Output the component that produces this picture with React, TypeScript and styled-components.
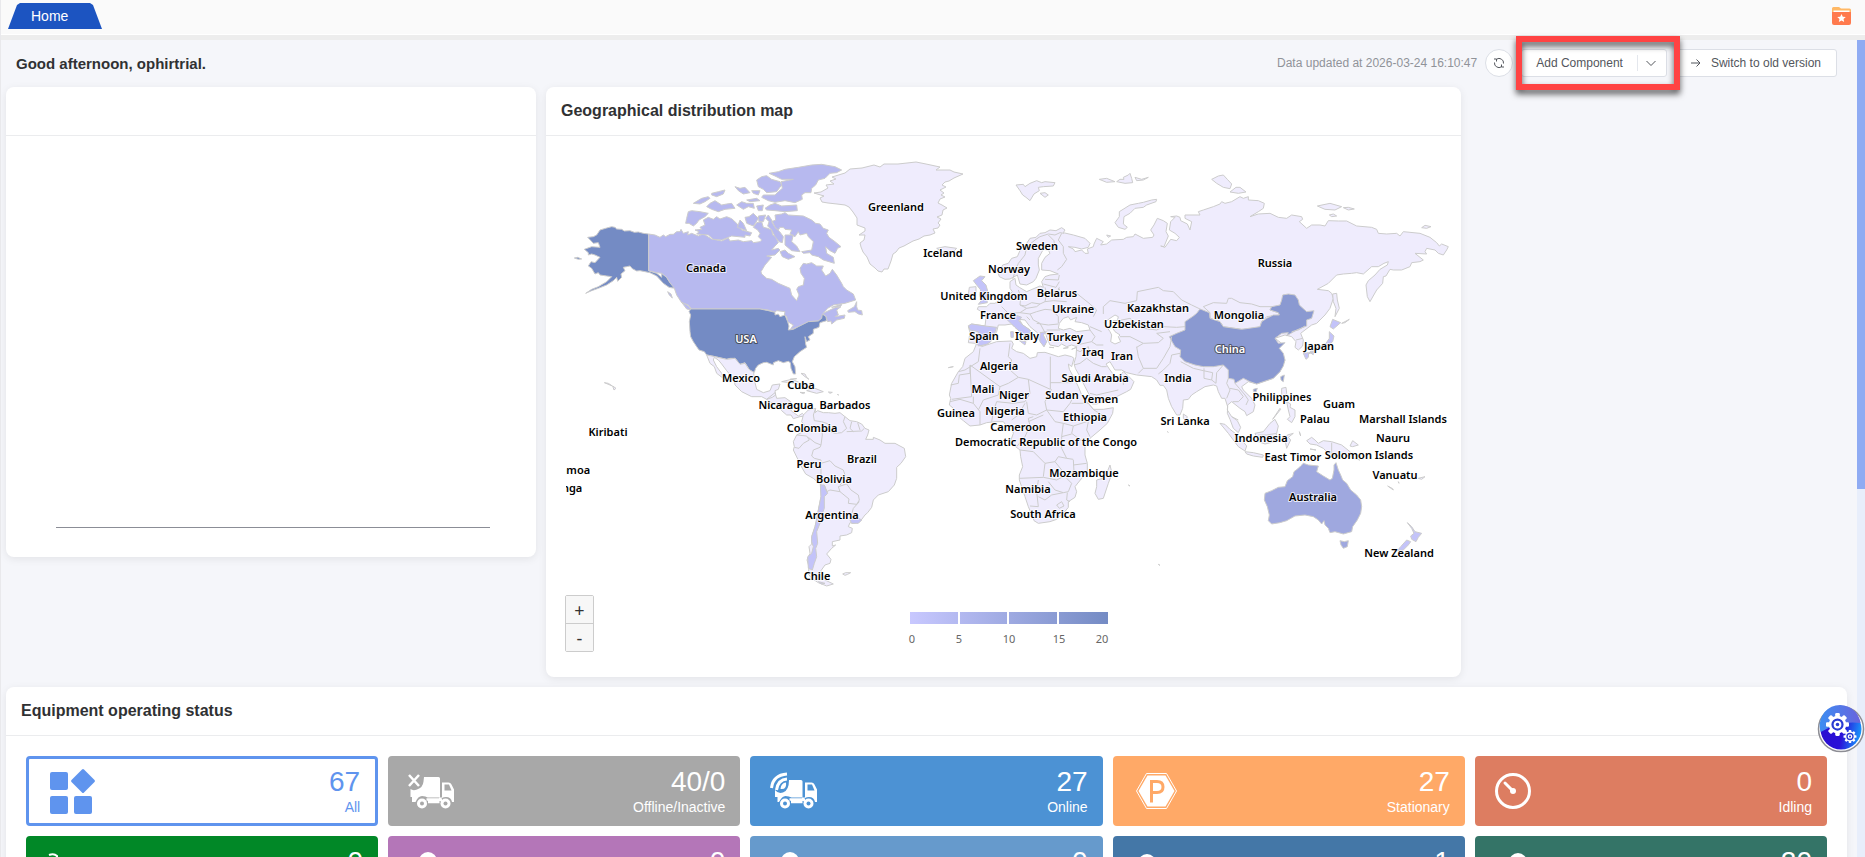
import React from 'react';
import styled, { createGlobalStyle, css } from 'styled-components';

const GlobalStyle = createGlobalStyle`
  * { box-sizing: border-box; }
  html, body { margin: 0; padding: 0; }
  body {
    background: #f5f6fa;
    color: #303133;
    font-family: "Liberation Sans", Arial, sans-serif;
    overflow: hidden;
  }
  button { font-family: inherit; cursor: pointer; }
`;

/* ---------- page frame ---------- */

const Page = styled.div`
  height: 100vh;
  display: flex;
  flex-direction: column;
  overflow: hidden;
  border-left: 1px solid #e9e9ec;
`;

const TopBar = styled.header`
  display: flex;
  flex: none;
  justify-content: space-between;
  align-items: flex-start;
  height: 40px;
  padding: 3px 14px 0 7px;
  background: #fafafa;
  border-bottom: 5px solid #ededed;
  box-shadow: inset 0 -1px 0 #ffffff;
`;

const Tab = styled.button`
  width: 94px;
  height: 26px;
  padding: 0 0 0 23px;
  border: 0;
  text-align: left;
  font-size: 14px;
  line-height: 26px;
  color: #ffffff;
  background: #1c54c1;
  clip-path: polygon(9px 2px, 12px 0, 82px 0, 85px 2px, 100% 100%, 0 100%);
`;

const FolderButton = styled.button`
  display: flex;
  margin-top: 4px;
  padding: 0;
  border: 0;
  background: none;
`;

const Body = styled.div`
  display: flex;
  flex: 1;
  min-height: 0;
`;

const Content = styled.main`
  flex: 1;
  min-width: 0;
`;

const ScrollTrack = styled.div`
  flex: none;
  width: 8px;
  background: #e8eefb;
`;

const ScrollThumb = styled.div`
  height: 55%;
  background: #8fabf3;
`;

/* ---------- greeting row ---------- */

const Greeting = styled.div`
  display: flex;
  align-items: center;
  justify-content: space-between;
  height: 47px;
  padding: 0 20px 0 15px;
`;

const GreetingText = styled.h1`
  margin: 0;
  font-size: 15px;
  line-height: 20px;
`;

const Actions = styled.div`
  display: flex;
  align-items: center;
  gap: 8px;
  margin-bottom: 1px;
`;

const Updated = styled.span`
  font-size: 12px;
  color: #909399;
`;

const control = css`
  display: flex;
  align-items: center;
  height: 28px;
  border: 1px solid #dcdfe6;
  background: #ffffff;
  color: #53565c;
  font-size: 12px;
`;

const RoundButton = styled.button`
  ${control}
  justify-content: center;
  width: 28px;
  padding: 0;
  border-radius: 50%;
`;

const OutlineButton = styled.button`
  ${control}
  gap: 10px;
  padding: 0 15px;
  border-radius: 3px;
`;

const SplitButton = styled.div`
  ${control}
  position: relative;
  border-radius: 3px;
`;

const SplitMain = styled.button`
  padding: 0 14px;
  border: 0;
  background: none;
  color: inherit;
  font-size: 12px;
`;

const SplitToggle = styled.button`
  display: flex;
  align-items: center;
  height: 16px;
  padding: 0 9px 0 7px;
  border: 0;
  border-left: 1px solid #e4e7ed;
  background: none;
  color: inherit;
`;

const Highlight = styled.div`
  position: absolute;
  z-index: 5;
  inset: -14px -14px -14px -6px;
  border: 6px solid #ff4343;
  filter: drop-shadow(0 4px 3px rgba(0, 0, 0, 0.65));
  pointer-events: none;
`;

/* ---------- cards ---------- */

const CardGrid = styled.div`
  display: grid;
  grid-template-columns: 530fr 915fr 376fr;
  align-items: start;
  gap: 10px;
  padding: 0 10px 0 5px;
`;

const Card = styled.section<{ $wide?: boolean }>`
  grid-column: ${(p) => (p.$wide ? '1 / -1' : 'auto')};
  border-radius: 8px;
  background: #ffffff;
  box-shadow: 0 2px 8px rgba(0, 0, 0, 0.08);
`;

const CardHeader = styled.header`
  display: flex;
  align-items: center;
  height: 49px;
  padding: 0 15px;
  border-bottom: 1px solid #ebecee;
`;

const CardTitle = styled.h2`
  margin: 0;
  font-size: 16px;
  line-height: 20px;
  color: #303133;
`;

const EmptyChart = styled.div`
  height: 421px;
  padding: 0 46px 29px 50px;
`;

const AxisLine = styled.div`
  height: 100%;
  border-bottom: 1px solid #8b8d96;
`;

/* ---------- map ---------- */

const MapBody = styled.div`
  position: relative;
  padding: 20px 10px 20px 20px;
`;

const MapSvg = styled.svg`
  display: block;
  width: 100%;
  height: auto;
  overflow: hidden;
`;

const MapLabel = styled.text<{ $light?: boolean }>`
  font: 600 11px "Noto Sans", sans-serif;
  text-anchor: middle;
  fill: ${(p) => (p.$light ? '#ffffff' : '#000000')};
  stroke: ${(p) => (p.$light ? '#333333' : '#ffffff')};
  stroke-width: 2px;
  stroke-opacity: ${(p) => (p.$light ? 0.7 : 0.75)};
  stroke-linejoin: round;
  paint-order: stroke;
`;

const LegendLabel = styled.text`
  font: 11px "Noto Sans", sans-serif;
  text-anchor: middle;
  fill: #666666;
`;

const ZoomControls = styled.div`
  position: absolute;
  left: 19px;
  bottom: 25px;
  display: flex;
  flex-direction: column;
  border: 1px solid #cccccc;
  border-radius: 2px;
`;

const ZoomButton = styled.button`
  width: 27px;
  height: 27px;
  padding: 0;
  border: 0;
  background: #f7f7f7;
  color: #333333;
  font: 18px/26px "Noto Sans", sans-serif;
  & + & { height: 28px; border-top: 1px solid #cccccc; }
`;

const EMPTY = '#efecfd';
const PALE = '#c3c3f9';
const CANADA = '#b7b9ef';
const AUSTRALIA = '#9fa8df';
const CHINA = '#8a99d1';
const USA = '#748bc4';

const GREENLAND =
  'M248 37L255 36 262 32 260 29 268 28 264 25 270 23 266 21 279 17 284 13 296 12 308 9 314 11 318 8 332 8 350 6 360 8 374 11 370 14 384 14 388 16 397 18 388 22 383 25 379 26 376 29 380 31 374 34 378 37 375 39 379 41 374 43 372 47 376 49 381 52 377 54 376 59 371 61 375 63 372 67 374 69 372 72 367 73 369 77 364 79 358 80 353 83 347 85 338 90 333 92 330 96 327 98 325 105 322 113 318 113 316 116 312 115 309 112 304 108 301 101 297 96 295 91 294 87 298 84 299 79 293 79 299 75 299 72 291 69 291 62 287 56 283 51 279 49 271 48 262 47 256 46 254 42 258 40Z';

/* North America, on a grid three times finer than the map's own */
const northAmerica: [string, string][] = [
  [USA, 'M200 260L210 262 215 267 230 268 238 273 255 272 268 277 280 276 295 280 311 282 311 392 335 400 350 412 350 400 365 412 375 428 388 435 390 445 372 442 355 430 335 408 315 398 300 395 285 392 275 393 262 386 255 378 245 380 235 382 240 392 228 402 230 412 218 424 215 412 205 422 185 435 160 445 140 452 122 460 140 448 160 440 185 425 200 410 185 408 165 405 160 398 150 402 140 385 130 378 138 365 150 368 165 352 150 345 140 342 130 345 130 338 118 328 140 320 165 322 160 308 145 310 128 292 145 290 155 285 165 270 185 264Z M88 354L98 352 110 357 100 358Z'],
  [CANADA, 'M311 282L330 285 345 292 355 285 362 290 375 283 385 283 395 275 405 275 408 268 415 280 430 275 428 285 440 280 460 288 475 282 500 297 530 303 550 294 555 303 580 300 595 305 620 302 625 308 645 305 650 300 640 290 645 280 638 270 625 262 635 248 650 245 655 262 668 265 680 270 683 285 692 290 700 308 690 318 680 330 700 325 705 330 690 345 665 348 680 352 660 375 648 395 650 402 665 415 680 418 700 430 735 445 740 465 755 482 762 465 755 448 760 440 775 435 778 415 768 400 765 385 775 370 785 372 800 368 815 378 835 378 830 390 842 408 855 400 862 388 875 405 890 430 895 440 905 450 925 462 932 480 900 490 865 495 848 505 835 520 855 510 870 503 888 500 875 510 880 525 870 530 900 525 898 535 875 540 860 552 858 543 848 545 843 530 835 522 830 535 820 543 790 545 775 555 760 560 735 570 745 555 728 545 725 530 718 525 720 515 695 512 690 517 670 510 645 507 440 507 430 495 410 488 395 465 388 445 375 428 365 412 350 400 335 398 311 392Z M935 485L928 500 908 512 910 517 930 515 940 522 952 525 950 512 938 510 935 500Z M860 502L890 493 888 498Z'],
  [CANADA, 'M430 215L440 212 465 215 490 220 480 230 462 240 455 250 445 258 432 250 422 250 425 235Z M490 232L505 238 515 230 525 237 545 230 560 236 575 250 590 270 620 278 615 288 600 285 600 292 560 288 530 300 505 298 490 285 455 282 462 275 450 270 470 268 465 262 480 255 475 240Z M445 190L470 175 490 170 495 175 480 185 465 192Z M500 160L520 155 540 150 535 162 515 170 500 165Z M485 200L495 190 510 182 530 195 545 192 560 190 570 205 540 208 520 215 500 208Z M570 140L585 145 600 142 615 158 595 162 580 152Z M620 152L645 152 640 165 625 160Z M575 195L590 185 605 190 625 190 628 205 610 200 595 208Z M635 198L655 195 652 212 640 212Z M660 205L675 195 690 190 710 198 755 195 757 212 720 215 690 212 665 210Z'],
  [CANADA, 'M635 120L650 110 665 107 680 118 705 125 710 135 695 155 665 158 655 148 640 140Z M672 100L700 95 720 88 760 82 800 75 830 73 870 80 890 90 875 98 855 100 840 115 820 120 812 135 800 145 798 158 780 158 770 165 772 178 750 188 720 182 690 187 670 182 650 172 655 165 690 165 700 155 712 145 708 125 745 118 710 118 690 108Z M605 180L635 175 645 182 615 185Z M600 232L612 230 625 220 640 235 632 248 625 258 605 250Z M577 262L585 240 595 250 605 272Z M640 228L662 225 655 245 642 245Z'],
  [CANADA, 'M690 225L710 222 720 218 730 225 775 228 800 240 812 250 825 252 835 265 850 270 845 280 852 292 870 305 888 320 878 325 870 340 855 332 842 320 845 340 865 352 868 370 855 366 835 360 820 350 800 345 795 338 775 340 770 335 800 330 805 305 790 290 785 280 765 285 760 275 750 290 735 282 740 270 720 268 715 262 705 262 700 270 690 262 680 245 692 240Z M662 235L672 245 668 258 680 270 690 290 702 305 712 308 715 290 704 275 690 262 680 240 670 225Z M720 285L745 285 740 305 755 318 765 335 740 332 720 315Z M705 335L720 330 730 340 750 350 730 358 712 350Z M410 487L430 497 440 510 425 507Z M368 455L378 462 382 474 372 464Z'],
  [USA, 'M437 507L645 507 670 512 690 517 690 525 700 522 705 530 720 525 728 545 732 558 730 570 745 568 760 560 790 545 820 543 830 535 832 522 843 530 845 542 825 548 822 562 805 568 805 580 790 590 795 600 785 605 780 590 782 612 785 622 765 635 748 650 742 665 750 680 752 702 745 702 738 685 736 668 730 664 715 668 700 662 685 668 685 675 665 667 655 668 640 675 632 685 628 697 615 692 600 668 585 673 570 655 555 655 545 658 510 650 485 645 478 635 462 630 455 620 445 605 437 590 435 575 433 545 437 525 432 515Z'],
  [EMPTY, 'M485 645L510 650 545 658 570 655 585 673 600 670 612 688 626 697 628 720 635 748 655 758 675 752 682 735 705 732 700 748 690 752 692 765 682 772 665 778 650 770 620 770 590 755 570 735 568 720 545 692 530 672 520 660 508 652 505 660 515 680 530 700 535 715 515 700 508 680 495 670Z M665 778L675 770 690 758 695 775 720 773 737 785 732 805 742 815 760 828 772 820 780 828 765 830 745 836 738 825 725 825 710 812 702 800 690 795Z'],
  [EMPTY, 'M710 725L740 718 770 730 800 745 775 743 750 730Z M785 752L810 745 835 755 815 760Z M765 757L780 758 775 761Z M850 756L862 757 855 760Z M768 700L780 702 785 712 792 718 780 710Z M735 718L755 716Z M878 762L880 766Z'],
  [EMPTY, 'M178 728L190 730 202 738Z M203 738L213 745 207 750Z'],
];

const southAmerica: [string, string][] = [
  [EMPTY, 'M775 195L790 180 812 175 810 188 818 182 835 188 850 188 870 190 885 188 900 200 915 212 935 215 950 222 960 235 972 240 968 255 962 268 985 268 985 262 1005 270 1020 280 1050 280 1078 295 1082 320 1068 340 1055 352 1055 385 1048 405 1030 425 1000 435 985 450 980 472 968 488 960 495 945 515 925 520 915 518 910 530 922 535 920 548 905 555 885 558 885 570 862 575 862 588 872 585 860 595 845 612 858 628 855 640 840 645 828 662 840 690 865 702 845 708 820 698 800 685 790 672 792 650 786 630 795 610 792 590 800 582 800 560 810 530 815 510 820 480 828 440 828 405 805 385 782 372 772 355 762 335 745 300 748 290 745 275 755 255 775 245 778 225 770 215Z'],
  [PALE, 'M826 405L838 405 848 430 838 440 838 475 828 500 825 520 815 545 818 580 812 595 815 620 808 640 802 660 790 655 788 620 800 610 805 590 800 575 800 560 810 530 820 480 828 440Z M915 510L930 498 950 510 940 520 920 520Z M820 695L840 700 828 702Z'],
  [EMPTY, 'M893 672L902 668 917 668 908 673 900 676Z'],
];
const southBorders =
  'M812 175L805 195 808 212 830 215 850 222 850 240 830 238 832 255 828 285 M755 255L785 258 793 270 775 280 762 295 748 292 M790 262L810 278 828 285 825 292 805 300 800 318 808 325 828 330 828 405 M828 340L855 332 870 348 895 360 900 375 897 392 885 405 M880 410L905 402 918 420 940 435 943 450 935 463 910 460 912 447 885 425ZM838 405L845 425 855 420 885 425 M900 200L895 215 905 235 890 248 870 250 855 245 M920 215L915 235 925 245 M938 218L945 240 M958 235L950 243 905 245 M943 455L925 475 915 510';

/* Europe, Africa and Asia share one grid */
const oldWorld: [string, string][] = [
  [EMPTY, 'M205 370L218 345 235 340 245 325 262 320 275 290 285 288 300 265 318 262 330 250 345 248 360 240 378 242 395 233 405 240 400 248 430 255 465 265 480 280 475 292 455 297 435 292 415 290 430 297 435 305 455 300 465 310 475 310 472 297 490 290 492 282 500 265 520 275 512 285 530 282 545 270 580 268 590 262 610 260 615 252 640 265 668 262 672 255 662 240 672 225 682 205 700 212 712 220 708 245 715 258 702 290 692 288 705 292 722 268 740 272 748 262 735 250 718 240 722 215 735 202 722 200 740 198 750 202 752 212 772 222 780 240 785 215 765 205 765 195 810 195 805 185 820 180 850 170 870 162 875 155 885 160 905 155 930 140 940 145 955 140 955 150 985 152 1003 160 1000 175 985 185 960 200 985 192 1020 190 1045 202 1070 205 1085 195 1115 200 1118 208 1108 215 1130 235 1145 225 1170 225 1185 228 1195 212 1225 213 1250 213 1280 228 1325 232 1340 238 1345 250 1370 252 1400 250 1410 258 1420 245 1470 250 1500 262 1520 278 1528 288 1535 282 1555 290 1550 300 1540 315 1525 310 1515 300 1490 295 1485 305 1490 312 1455 310 1480 330 1470 335 1445 338 1440 350 1415 360 1390 360 1380 358 1368 378 1360 380 1358 400 1340 420 1320 455 1312 440 1308 405 1315 392 1335 375 1350 358 1372 345 1375 335 1362 340 1345 350 1325 350 1300 372 1280 368 1265 370 1240 372 1220 375 1195 400 1162 418 1195 422 1205 430 1210 445 1200 475 1185 495 1160 520 1145 525 1125 540 1112 550 1120 570 1118 588 1105 600 1095 592 1098 575 1085 560 1065 555 1035 565 1055 580 1040 600 1065 630 1050 665 1030 685 980 702 955 695 935 710 940 720 965 745 975 765 970 785 950 797 945 785 930 775 905 755 893 765 892 780 905 800 922 812 932 832 925 848 910 835 900 808 892 790 893 770 885 745 875 745 865 725 860 708 850 705 825 710 800 725 785 735 775 748 760 750 758 775 750 795 740 795 725 770 715 745 710 720 700 706 690 706 680 690 665 680 620 675 590 668 575 660 555 660 540 635 528 642 540 660 555 680 570 678 580 665 595 678 612 695 602 718 590 725 560 740 520 755 500 762 487 762 478 735 465 710 450 680 436 655 432 640 438 620 440 590 425 585 410 590 395 582 385 590 360 585 350 562 347 548 335 548 335 560 350 575 342 590 325 565 322 548 300 530 285 510 268 508 278 525 300 540 305 552 293 550 293 570 285 572 278 552 255 532 245 522 225 525 205 525 200 545 190 560 182 575 170 583 145 588 135 580 115 578 120 548 115 530 125 522 165 528 168 505 165 490 142 478 145 470 170 470 180 460 195 460 222 440 240 432 247 425 240 415 240 395 255 385 258 405 268 412 290 425 330 408 340 412 335 395 345 380 360 375 385 372 360 362 335 360 335 340 345 322 360 310 355 300 340 298 325 325 325 345 328 360 318 385 310 395 290 405 270 402 262 375 240 387 225 388 208 380Z'],
  [EMPTY, 'M140 580L155 590 170 585 200 575 245 573 250 582 245 595 260 605 280 610 300 625 320 620 322 608 345 607 385 620 405 615 425 620 432 625 425 650 415 642 418 658 430 680 445 710 455 735 475 760 490 778 520 778 550 773 548 790 532 820 510 840 480 865 465 890 465 915 472 940 472 970 455 985 435 1010 440 1025 435 1042 415 1055 415 1072 400 1090 380 1108 360 1115 325 1120 312 1112 308 1100 295 1070 285 1040 268 990 268 975 278 950 272 920 270 900 250 885 243 870 250 850 245 830 230 828 220 815 195 815 170 818 150 825 120 828 100 812 85 800 70 775 58 765 62 745 58 735 65 700 85 665 98 650 105 625 130 605Z M540 945L546 970 535 1000 520 1045 505 1048 495 1030 500 1010 500 990 520 985 532 965Z'],
  ['#ffffff', 'M400 505L415 500 422 510 440 502 435 515 455 518 475 525 480 540 440 545 420 535 400 540 385 535 388 520Z M540 505L555 495 565 500 562 512 550 512 558 525 545 530 555 545 570 555 565 560 572 575 555 582 542 575 545 555 540 545 530 530 522 518Z'],
  [EMPTY, 'M258 105L280 103 285 110 300 100 320 92 335 98 345 95 375 98 370 108 340 110 325 112 328 122 312 132 300 152 288 142 278 135 270 122Z M330 130L345 128 355 135 345 142Z M508 88L530 85 555 95 530 97Z M560 95L570 88 582 88 580 82 595 75 600 70 605 85 608 98 585 100Z M615 82L635 88 655 82 640 90 620 92Z M680 148L678 155 650 165 640 172 615 175 600 190 582 200 580 222 592 232 585 238 565 232 555 218 568 200 568 185 600 165 625 160 640 157 665 150Z M20 295L45 290 80 295 70 305 40 308Z M530 255L542 258 535 262Z'],
  [EMPTY, 'M845 88L865 78 880 75 892 88 905 102 900 116 880 112 860 100Z M900 126L918 112 930 112 948 126 925 130Z M1162 168L1200 160 1235 170 1215 180 1185 178Z M1240 173L1255 172 1273 177 1255 180Z M1198 195L1210 192 1220 198 1205 200Z M1475 233L1485 226 1503 230 1490 235Z M1208 432L1220 430 1222 450 1228 475 1215 500 1218 475 1210 455Z M1235 520L1258 508 1245 518Z'],
  [PALE, 'M140 385L150 378 165 380 155 392 168 405 175 430 170 445 172 458 145 463 155 450 148 435 152 420 140 405 130 392Z M115 527L125 522 165 528 200 532 190 560 182 575 170 583 145 588 140 575 145 545 120 540Z M232 510L245 500 262 497 275 502 266 512 278 525 300 540 305 552 293 550 293 570 285 572 278 552 255 532 245 522Z M242 545L250 545 250 562 243 562Z M330 548L350 545 340 555 350 575 342 590 330 575Z M358 592L372 593Z M268 572L288 575 285 585Z'],
  [EMPTY, 'M118 412L138 410 138 428 115 435Z M440 592L425 598Z M400 595L415 593Z'],
  [PALE, 'M1208 508L1232 518 1210 537 1200 530Z M1198 545L1212 558 1208 575 1195 585 1180 592 1160 600 1135 612 1140 605 1165 592 1188 580 1198 565Z M1120 610L1136 608 1135 622 1128 628Z M1140 608L1152 605 1150 614Z'],
  [EMPTY, 'M820 470L850 458 890 460 895 445 905 445 930 458 965 462 990 470 1025 470 1020 480 1045 488 1048 495 1010 500 995 515 990 530 960 538 935 538 880 530 870 515 840 505 840 488Z'],
  [CHINA, 'M810 477L818 480 838 488 840 505 870 515 880 530 935 538 990 530 995 515 1010 505 1030 495 1048 495 1045 488 1020 480 1025 470 1050 465 1055 450 1058 435 1075 432 1095 435 1105 450 1108 465 1130 485 1152 482 1145 505 1130 510 1130 528 1100 540 1070 557 1075 548 1055 550 1035 565 1045 580 1065 578 1048 595 1060 610 1065 630 1060 648 1050 665 1030 685 1000 695 980 702 960 695 940 685 915 700 912 688 895 685 895 660 880 645 850 650 820 650 795 645 765 635 750 620 752 600 735 590 728 578 718 560 740 550 765 540 765 515 790 498 800 490Z M1052 680L1063 675 1060 695 1053 690Z M970 718L982 715 978 726 970 724Z'],
  [EMPTY, 'M870 820L885 823 900 838 918 852 935 870 950 888 945 903 925 890 910 870 895 850Z M945 905L970 908 1000 915 998 922 970 918 950 912Z M975 850L1000 845 1020 820 1035 808 1045 828 1040 850 1035 875 1005 882 985 875Z M1055 715L1068 712 1070 730 1060 742 1065 755 1055 745Z M1070 755L1082 762 1080 772 1095 780 1095 800 1085 818 1072 808 1080 800 1075 780Z M1028 808L1050 775 1052 778Z M1065 870L1072 855 1090 850 1075 862 1082 870 1070 895Z M1130 872L1145 862 1155 870 1165 880 1180 872 1205 875 1235 885 1260 905 1270 925 1290 930 1265 922 1240 910 1220 918 1195 910 1180 895 1160 885 1140 882Z M1108 845L1112 858Z M1268 872L1285 885 1268 890 1260 888Z M1020 922L1060 925Z M1140 897L1158 900Z M760 792L772 800 768 812 760 805Z'],
  [AUSTRALIA, 'M1105 955L1112 948 1120 940 1135 945 1165 948 1160 965 1180 978 1200 990 1207 985 1212 960 1212 945 1218 938 1225 960 1232 975 1238 990 1250 1000 1262 1020 1280 1035 1292 1050 1295 1070 1292 1090 1282 1110 1268 1130 1265 1145 1240 1152 1215 1145 1200 1148 1195 1135 1185 1125 1182 1112 1175 1122 1165 1110 1150 1100 1125 1095 1095 1098 1070 1112 1050 1118 1025 1122 1015 1112 1018 1095 1012 1070 1003 1050 1005 1030 1025 1022 1045 1012 1065 1010 1072 992 1088 980 1092 965Z M1230 1172L1243 1175 1255 1172 1252 1190 1240 1195 1233 1185Z'],
  [PALE, 'M1432 1118L1445 1130 1455 1145 1475 1150 1465 1162 1458 1175 1445 1168 1442 1158 1452 1150 1445 1135Z M1430 1170L1442 1175 1435 1185 1420 1200 1402 1202 1412 1190Z'],
  [EMPTY, 'M1373 1008L1388 1016 1390 1020Z M1465 985L1485 980 1475 988Z M1405 995L1407 1000Z M595 1005L600 1008Z M712 845L715 847Z M55 653L70 650Z M685 1243L690 1246Z'],
];
const oldBorders =
  'M248 388L255 365 265 340 285 315 290 290 318 268 330 260 355 252 375 255 390 248 402 250 M355 255L372 272 375 300 M395 250L385 270 400 290 400 310 410 328 395 350 382 360 M345 388L385 390 388 375 M340 402L378 412 388 395 M385 420L388 412 M345 412L350 430 345 455 330 462 305 458 285 468 270 465 272 440 265 420 M385 415L405 435 440 430 M345 455L370 452 410 455 M440 430L480 462 500 480 490 500 M270 465L290 475 320 470 330 462 M235 490L270 488 290 475 M215 470L235 490 225 505 M225 440L212 455 200 460 M270 488L300 492 320 485 345 478 M300 492L310 510 330 520 345 548 M345 478L365 480 385 500 385 520 M320 520L355 525 385 522 M290 500L300 510 M350 540L390 540 M480 540L495 560 485 575 440 585 M485 575L500 585 520 585 M480 530L515 545 M520 492L520 470 540 452 585 460 620 452 622 425 685 412 700 422 730 425 755 450 785 465 810 477 M565 512L600 505 640 535 680 540 700 530 740 532 765 530 M570 560L600 560 640 580 685 578 700 565 680 550 720 545 M620 590L625 620 640 655 625 670 M640 580L620 592 M640 655L680 655 700 625 720 590 725 560 M685 672L700 660 720 640 725 615 750 610 M752 635L790 655 820 662 M822 655L822 685 845 690 848 668 820 662 M845 690L858 700 860 668 880 645 M895 685L890 700 900 720 890 745 M900 715L925 720 940 740 925 755 908 755 M915 700L928 715 945 735 955 750 948 765 M440 600L450 605 475 590 M432 645L450 640 470 625 490 640 515 650 530 650 M475 590L480 615 M550 680L580 690 580 705 M565 720L500 735 480 730 M1085 545L1105 540 1125 528 M1098 570L1118 565 M1040 850L1010 855 985 855 M1205 878L1205 915 M905 800L925 810 M1445 1175';
const africaBorders =
  'M85 95L105 90 145 65 150 25 M62 135L85 130 88 105 120 100 120 80 M120 75L210 140 235 130 265 112 M240 10L235 50 245 60 240 90 265 112 M265 112L295 118 361 148 361 50 M361 128L425 128 M295 118L300 160 285 185 M120 75L125 170 65 178 M60 185L90 178 130 190 130 170 M210 140L205 165 160 180 145 210 M285 185L250 190 200 185 190 215 185 245 M130 190L150 215 150 255 M75 215L110 215 120 235 M365 148L345 185 350 210 320 225 295 220 290 185 M285 190L265 225 245 240 M350 210L375 245 400 250 430 258 470 245 M350 210L400 215 420 190 430 170 M425 190L475 190 492 210 525 230 M265 262L300 258 295 235 310 230 M295 245L340 225 M300 258L285 290 260 320 M270 330L310 335 345 370 375 365 395 390 M400 250L395 290 395 325 410 355 430 358 M430 258L425 280 465 310 M480 290L470 270 475 245 M395 290L425 282 M345 370L340 410 M268 415L340 412 380 420 400 410 430 395 M375 365L385 350 410 355 M430 375L470 370 M430 360L432 395 M325 420L320 455 325 500 300 498 M325 470L345 480 365 465 400 458 M355 425L375 450 400 458 415 455 425 430 410 415 M380 495L395 485 402 498 388 505Z M412 458L410 480 420 485';

const labels: [string, number, number][] = [
  ['Greenland', 330, 55], ['Canada', 140, 116], ['Mexico', 175, 226], ['Cuba', 235, 233],
  ['Nicaragua', 220, 253], ['Barbados', 279, 253], ['Colombia', 246, 276], ['Peru', 243, 312],
  ['Brazil', 296, 307], ['Bolivia', 268, 327], ['Argentina', 266, 363], ['Chile', 251, 424],
  ['Kiribati', 42, 280], ['Samoa', 6, 318], ['Tonga', 0, 336], ['Iceland', 377, 101],
  ['Sweden', 471, 94], ['Norway', 443, 117], ['United Kingdom', 418, 144], ['Belarus', 491, 141],
  ['Ukraine', 507, 157], ['Kazakhstan', 592, 156], ['Uzbekistan', 568, 172], ['France', 432, 163],
  ['Spain', 418, 184], ['Italy', 461, 184], ['Turkey', 499, 185], ['Iraq', 527, 200],
  ['Iran', 556, 204], ['Algeria', 433, 214], ['Saudi Arabia', 529, 226], ['Mali', 417, 237],
  ['Niger', 448, 243], ['Sudan', 496, 243], ['Yemen', 534, 247], ['Guinea', 390, 261],
  ['Nigeria', 439, 259], ['Ethiopia', 519, 265], ['Cameroon', 452, 275],
  ['Democratic Republic of the Congo', 480, 290], ['Mozambique', 518, 321], ['Namibia', 462, 337],
  ['South Africa', 477, 362], ['Russia', 709, 111], ['Mongolia', 673, 163], ['Japan', 753, 194],
  ['India', 612, 226], ['Philippines', 716, 245], ['Guam', 773, 252], ['Palau', 749, 267],
  ['Marshall Islands', 837, 267], ['Sri Lanka', 619, 269], ['Indonesia', 695, 286], ['Nauru', 827, 286],
  ['East Timor', 727, 305], ['Solomon Islands', 803, 303], ['Vanuatu', 829, 323],
  ['Australia', 747, 345], ['New Zealand', 833, 401],
];

const legendStops: [string, number][] = [['0', 346], ['5', 393], ['10', 443], ['15', 493], ['20', 536]];

function Shapes({ items }: { items: [string, string][] }) {
  return (
    <>
      {items.map(([fill, d], i) => (
        <path key={i} fill={fill} d={d} />
      ))}
    </>
  );
}

function WorldMap() {
  return (
    <MapSvg viewBox="0 0 885 501" role="img" aria-label="Geographical distribution map">
      <defs>
        <linearGradient id="scale">
          <stop offset="0" stopColor="#c8c8ff" />
          <stop offset="1" stopColor="#748bc4" />
        </linearGradient>
      </defs>
      <g stroke="#cccccc" strokeWidth="1" strokeLinejoin="round" fill="none">
        <path fill={EMPTY} d={GREENLAND} />
        <g transform="translate(-21 -16) scale(.33333)" strokeWidth="3">
          <Shapes items={northAmerica} />
        </g>
        <g transform="translate(-21 194) scale(.33333)" strokeWidth="3">
          <Shapes items={southAmerica} />
          <path d={southBorders} />
        </g>
        <g transform="translate(364 -6) scale(.33333)" strokeWidth="3">
          <Shapes items={oldWorld} />
          <path d={oldBorders} />
        </g>
        <g transform="translate(364 184) scale(.33333)" strokeWidth="3">
          <path d={africaBorders} />
        </g>
      </g>
      {labels.map(([name, x, y]) => (
        <MapLabel key={name} x={x} y={y}>{name}</MapLabel>
      ))}
      <MapLabel $light x={180} y={187}>USA</MapLabel>
      <MapLabel $light x={664} y={197}>China</MapLabel>
      <rect x="344" y="456" width="198" height="12" fill="url(#scale)" />
      <path d="M393 456v12M442 456v12M492 456v12" stroke="#ffffff" strokeWidth="2" />
      {legendStops.map(([value, x]) => (
        <LegendLabel key={value} x={x} y={487}>{value}</LegendLabel>
      ))}
    </MapSvg>
  );
}

/* ---------- equipment status tiles ---------- */

const Tiles = styled.div`
  display: grid;
  grid-template-columns: repeat(5, 1fr);
  gap: 10px;
  padding: 20px;
`;

const Tile = styled.button<{ $color: string; $outlined?: boolean }>`
  display: flex;
  align-items: center;
  justify-content: space-between;
  height: 70px;
  padding: ${(p) => (p.$outlined ? '7px 15px 7px 17px' : '7px 12px 7px 17px')};
  border: 3px solid ${(p) => p.$color};
  border-radius: 4px;
  background: ${(p) => (p.$outlined ? '#ffffff' : p.$color)};
  color: ${(p) => (p.$outlined ? p.$color : '#ffffff')};
  text-align: right;
  svg { flex: none; }
`;

const TileText = styled.span`
  display: flex;
  flex-direction: column;
  height: 50px;
`;

const TileValue = styled.span`
  font-size: 28px;
  line-height: 32px;
`;

const TileLabel = styled.span`
  font-size: 14px;
  line-height: 18px;
`;

const Icon = ({ children }: { children: React.ReactNode }) => (
  <svg width="50" height="50" viewBox="0 0 50 50" fill="currentColor" aria-hidden="true">
    {children}
  </svg>
);

const AllIcon = () => (
  <Icon>
    <rect x="4" y="6" width="18" height="18" rx="2" />
    <rect x="4" y="30" width="18" height="18" rx="2" />
    <rect x="28" y="30" width="18" height="18" rx="2" />
    <path d="M36 3.500q1-1 2 0L48.500 14q1 1 0 2L38 26.500q-1 1-2 0L25.500 16q-1-1 0-2z" />
  </Icon>
);

const TruckWheels = ({ shift, bg }: { shift: number; bg: string }) => (
  <g transform={`translate(${shift} 0)`}>
    <path d="M34 16.500h6.500q2 0 3 2l2.500 5V36h-2q-1-5-6-5t-6 4h-1V31.500H34z" />
    <path d="M32 35V32.500h2V36z" />
    <path d="M36.500 18.500h4.500l2.500 6h-7z" fill={bg} />
    <circle cx="14" cy="37.500" r="5" />
    <circle cx="14" cy="37.500" r="2" fill={bg} />
    <circle cx="37.500" cy="37.500" r="5" />
    <circle cx="37.500" cy="37.500" r="2" fill={bg} />
    <path d="M20 36h11.500M18.500 33.500h14" stroke="currentColor" strokeWidth="2.500" />
  </g>
);

const OfflineIcon = () => (
  <Icon>
    <path d="M1 9l10 11M11 9L1 20" stroke="currentColor" strokeWidth="2.500" fill="none" />
    <path d="M16 11h14.500q1.500 0 1.500 1.500V31.500H19.500Q18 30 14 30t-6.500 6H4v-5H2.500V23Q5 25 9 23.500q6-2 6.500-8z" />
    <TruckWheels shift={0} bg="#a8a8a8" />
  </Icon>
);

const OnlineIcon = () => (
  <Icon>
    <path d="M1.500 22Q3 9 17 8M6.500 24Q8 13.500 17 13" stroke="currentColor" strokeWidth="3" fill="none" />
    <path d="M10.500 23Q11 17 16 16.500 17 24 10.500 23z" />
    <path d="M19 14h12q1.500 0 1.500 1.500V31.500H21.500Q19 30 15.500 30T9 36H7.500v-5H5v-7Q8 28 13 26.500q6-2 6-12.500z" />
    <TruckWheels shift={1} bg="#4c92d4" />
  </Icon>
);

const ParkIcon = () => (
  <Icon>
    <path d="M13.500 7.500h20l10 17.500-10 17.500h-20L3.500 25z" fill="none" stroke="currentColor" strokeWidth="1" />
    <path d="M14.500 9.500h18L41.500 25l-9 15.500h-18L5.500 25z" />
    <path d="M18.500 36.500V15.500h5.500q6 0 6 5.500t-6 5.500h-5.500" fill="none" stroke="#ffa967" strokeWidth="3" />
  </Icon>
);

const GaugeIcon = () => (
  <Icon>
    <circle cx="18" cy="25" r="16.500" fill="none" stroke="currentColor" strokeWidth="3" />
    <path d="M10 17l8 8" stroke="currentColor" strokeWidth="3" strokeLinecap="round" />
    <circle cx="18" cy="25" r="3" />
  </Icon>
);

const FlagIcon = () => (
  <Icon>
    <path d="M3 9q5-2 8 1v4M4 14v28" fill="none" stroke="currentColor" strokeWidth="2" />
  </Icon>
);

const PersonIcon = ({ x = 20, y = 15 }: { x?: number; y?: number }) => (
  <Icon>
    <circle cx={x} cy={y} r="9" />
    <path d={`M${x - 14} 44q0-17 14-17t14 17z`} />
  </Icon>
);

type TileData = { value: string; label?: string; color: string; icon: React.ReactNode; outlined?: boolean };

const tiles: TileData[] = [
  { value: '67', label: 'All', color: '#5f94ee', icon: <AllIcon />, outlined: true },
  { value: '40/0', label: 'Offline/Inactive', color: '#a8a8a8', icon: <OfflineIcon /> },
  { value: '27', label: 'Online', color: '#4c92d4', icon: <OnlineIcon /> },
  { value: '27', label: 'Stationary', color: '#ffa967', icon: <ParkIcon /> },
  { value: '0', label: 'Idling', color: '#dd7d61', icon: <GaugeIcon /> },
  { value: '0', color: '#018827', icon: <FlagIcon /> },
  { value: '0', color: '#b476b8', icon: <PersonIcon /> },
  { value: '0', color: '#669acc', icon: <PersonIcon /> },
  { value: '1', color: '#4477a7', icon: <PersonIcon x={14} y={17} /> },
  { value: '20', color: '#347467', icon: <PersonIcon x={23} y={16} /> },
];

/* ---------- floating settings button ---------- */

const FloatingButton = styled.button`
  position: fixed;
  right: 0;
  bottom: 104px;
  z-index: 10;
  display: flex;
  padding: 0;
  border: 0;
  border-radius: 50%;
  background: none;
`;

function Gear({ cx, cy, r, hub }: { cx: number; cy: number; r: number; hub: number }) {
  return (
    <g transform={`translate(${cx} ${cy})`}>
      {[0, 45, 90, 135].map((a) => (
        <rect key={a} x={-r * 0.2} y={-r} width={r * 0.4} height={r * 2} rx={r * 0.1} fill="#ffffff" transform={`rotate(${a})`} />
      ))}
      <circle r={r * 0.76} fill="#ffffff" />
      <circle r={hub} fill="none" stroke="#2a3bd2" strokeWidth={hub * 0.45} />
      <circle r={hub * 0.35} fill="#2a3bd2" />
    </g>
  );
}

export default function App() {
  return (
    <>
      <GlobalStyle />
      <Page>
        <TopBar>
          <Tab>Home</Tab>
          <FolderButton aria-label="Favorites">
            <svg width="19" height="18" viewBox="0 0 19 18">
              <path d="M0 3V1.500Q0 0 1.500 0H7l2 1.500h8.500Q19 1.500 19 3v4H0z" fill="#ffb865" />
              <path d="M1.500 3.500h16V8h-16z" fill="#ffffff" />
              <path d="M0 5h19v11q0 2-2 2H2q-2 0-2-2z" fill="#ff7a4d" />
              <path d="M9.500 7l1.300 2.800 3 .3-2.300 2 .7 3-2.700-1.500-2.700 1.500.7-3-2.300-2 3-.3z" fill="#ffffff" />
            </svg>
          </FolderButton>
        </TopBar>
        <Body>
          <Content>
            <Greeting>
              <GreetingText>Good afternoon, ophirtrial.</GreetingText>
              <Actions>
                <Updated>Data updated at 2026-03-24 16:10:47</Updated>
                <RoundButton aria-label="Refresh">
                  <svg width="12" height="12" viewBox="0 0 12 12" fill="none" stroke="#53565c">
                    <path d="M3.500 2H1M3.500 2v2.500M3.500 2.200A4.500 4.500 0 0 1 10.500 6.500M8.500 10H11M8.500 10V7.500M8.500 9.800A4.500 4.500 0 0 1 1.500 5.500" />
                  </svg>
                </RoundButton>
                <SplitButton>
                  <SplitMain>Add Component</SplitMain>
                  <SplitToggle aria-label="More components">
                    <svg width="12" height="12" viewBox="0 0 12 12" fill="none" stroke="#53565c">
                      <path d="M1.500 4L6 8.500 10.500 4" />
                    </svg>
                  </SplitToggle>
                  <Highlight />
                </SplitButton>
                <OutlineButton>
                  <svg width="10" height="10" viewBox="0 0 10 10" fill="none" stroke="#53565c">
                    <path d="M0 5h9M5.500 1.500L9 5 5.500 8.500" />
                  </svg>
                  Switch to old version
                </OutlineButton>
              </Actions>
            </Greeting>
            <CardGrid>
              <Card>
                <CardHeader />
                <EmptyChart>
                  <AxisLine />
                </EmptyChart>
              </Card>
              <Card>
                <CardHeader>
                  <CardTitle>Geographical distribution map</CardTitle>
                </CardHeader>
                <MapBody>
                  <WorldMap />
                  <ZoomControls>
                    <ZoomButton aria-label="Zoom in">+</ZoomButton>
                    <ZoomButton aria-label="Zoom out">-</ZoomButton>
                  </ZoomControls>
                </MapBody>
              </Card>
              <Card $wide>
                <CardHeader>
                  <CardTitle>Equipment operating status</CardTitle>
                </CardHeader>
                <Tiles>
                  {tiles.map((t, i) => (
                    <Tile key={i} $color={t.color} $outlined={t.outlined}>
                      {t.icon}
                      <TileText>
                        <TileValue>{t.value}</TileValue>
                        {t.label && <TileLabel>{t.label}</TileLabel>}
                      </TileText>
                    </Tile>
                  ))}
                </Tiles>
              </Card>
            </CardGrid>
          </Content>
          <ScrollTrack>
            <ScrollThumb />
          </ScrollTrack>
        </Body>
      </Page>
      <FloatingButton aria-label="Settings">
        <svg width="48" height="48" viewBox="0 0 48 48">
          <defs>
            <linearGradient id="orb" x1="0" y1="0.600" x2="1" y2="0.800">
              <stop offset="0" stopColor="#2a0fd0" />
              <stop offset="0.500" stopColor="#2b10d8" />
              <stop offset="1" stopColor="#17a5ff" />
            </linearGradient>
            <linearGradient id="gloss" x1="0" y1="0" x2="1" y2="0">
              <stop offset="0" stopColor="#3c8df2" />
              <stop offset="1" stopColor="#6a63dd" />
            </linearGradient>
          </defs>
          <circle cx="24" cy="24" r="22.500" fill="#ffffff" stroke="#8d8d94" strokeWidth="1.500" />
          <circle cx="24" cy="24" r="20.500" fill="url(#orb)" />
          <path d="M3.700 27A20.500 20.500 0 1 1 43.500 18Q24 15 3.700 27z" fill="url(#gloss)" />
          <Gear cx={20.500} cy={19.500} r={11.500} hub={5} />
          <Gear cx={33} cy={31.500} r={6.500} hub={3} />
        </svg>
      </FloatingButton>
    </>
  );
}
